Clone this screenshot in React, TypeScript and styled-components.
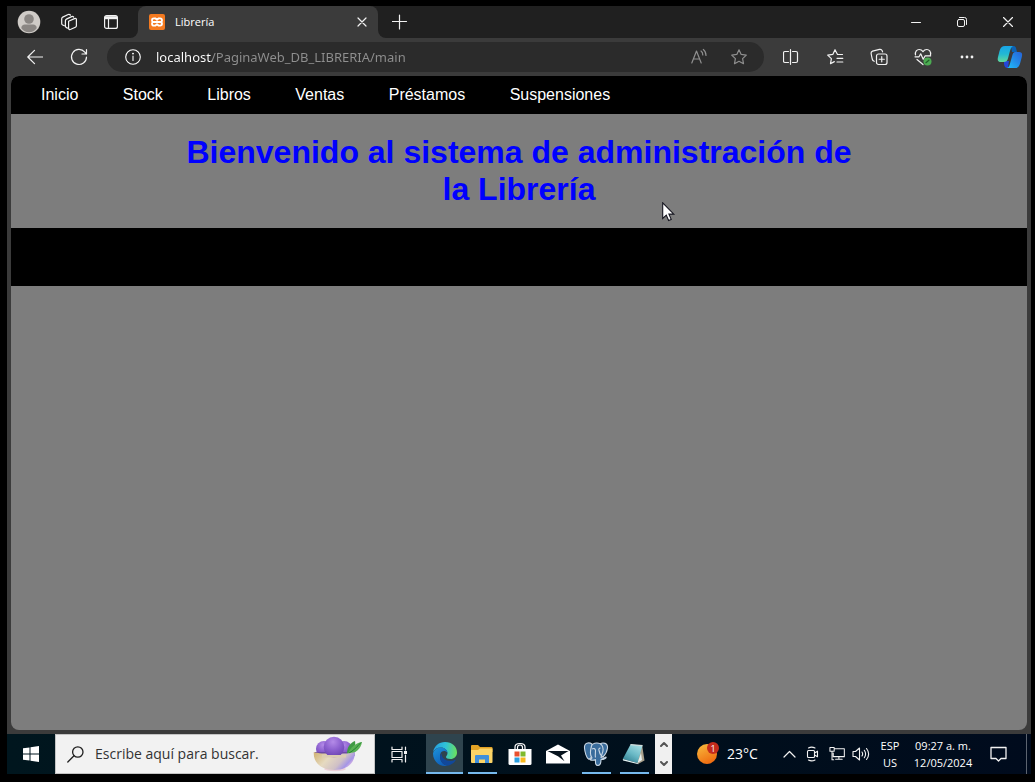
import React from 'react';
import styled, { createGlobalStyle, css } from 'styled-components';

const uiFont = `"Segoe UI", "Open Sans", "Noto Sans", sans-serif`;

const GlobalStyle = createGlobalStyle`
  *, *::before, *::after { box-sizing: border-box; }
  body { margin: 0; background: #000; }
  button, input { font: inherit; color: inherit; }
`;

const Desktop = styled.div`
  position: relative;
  display: flex;
  flex-direction: column;
  min-height: 100vh;
  padding: 6px 4px 8px 7px;
  background: #000;
  color: #fff;
  font: 12px/16px ${uiFont};
`;

const BrowserWindow = styled.div`
  flex: 1;
  display: flex;
  flex-direction: column;
  background: #3b3b3b;
`;

const TabStrip = styled.header`
  display: flex;
  height: 32px;
`;

const StripStart = styled.div`
  display: flex;
  padding-right: 3px;
  background: #202020;
  border-bottom-right-radius: 8px;
`;

const StripEnd = styled.div`
  flex: 1;
  display: flex;
  background: #202020;
  border-bottom-left-radius: 8px;
`;

const IconButton = styled.button<{ $width?: number; $dim?: boolean }>`
  flex: none;
  display: flex;
  align-items: center;
  justify-content: center;
  width: ${p => p.$width ?? 44}px;
  padding: 0;
  border: 0;
  background: none;
  color: ${p => (p.$dim ? '#8f8f8f' : '#f2f2f2')};
`;

const WindowControls = styled.div`
  display: flex;
  margin-left: auto;
`;

const TabBackdrop = styled.div`
  flex: 0 1 240px;
  background: #202020;
`;

const Tab = styled.div`
  display: flex;
  align-items: center;
  height: 100%;
  padding-left: 11px;
  border-radius: 8px 8px 0 0;
  background: #3b3b3b;
`;

const TabTitle = styled.span`
  flex: 1;
  margin-left: 10px;
  font-size: 11px;
`;

const Toolbar = styled.div`
  display: flex;
  height: 38px;
  padding-left: 6px;
`;

const AddressBar = styled.form`
  flex: 1;
  display: flex;
  align-items: center;
  height: 30px;
  margin: 4px 5px 4px 6px;
  padding: 0 4px 0 18px;
  border-radius: 15px;
  background: #2b2b2b;
`;

const UrlInput = styled.input`
  flex: 1;
  min-width: 0;
  margin-left: 15px;
  padding: 0;
  border: 0;
  outline: 0;
  font-family: "Segoe UI", "Noto Sans", sans-serif;
  font-size: 13px;
  line-height: 20px;
  color: transparent;
  caret-color: #fff;
  background: linear-gradient(90deg, #fff 56px, #8f8f8f 56px);
  background-clip: text;
  -webkit-background-clip: text;
`;

const Page = styled.div`
  flex: 1;
  margin: 0 4px 4px;
  border-radius: 8px;
  overflow: hidden;
  background: #7d7d7d;
  font: 16px/18px Arial, "Liberation Sans", sans-serif;
`;

const SiteNav = styled.nav`
  padding: 10px;
  background: #000;
`;

const NavList = styled.ul`
  margin: 0;
  padding: 0;
  list-style: none;
`;

const NavItem = styled.li`
  display: inline-block;
  padding: 0 20px;
`;

const NavLink = styled.a`
  color: #fff;
  text-decoration: none;
`;

const Title = styled.h1`
  max-width: 680px;
  margin: 0 auto;
  padding: 20px 0;
  color: #00f;
  font-size: 32px;
  line-height: 37px;
  text-align: center;
`;

const Band = styled.div`
  height: 58px;
  background: #000;
`;

const Pointer = styled.svg`
  position: absolute;
  left: 662px;
  top: 202px;
`;

const Taskbar = styled.footer`
  display: flex;
  height: 40px;
  background: linear-gradient(90deg, #00161e, #000f1c 65%, #000b1d);
`;

const SearchBox = styled.label`
  flex: 0 1 320px;
  display: flex;
  align-items: center;
  padding: 0 11px;
  border: 1px solid #c4c4c4;
  background: #f2f2f2;
  color: #202020;
`;

const SearchInput = styled.input`
  flex: 1;
  min-width: 0;
  margin-left: 11px;
  padding: 0;
  border: 0;
  outline: 0;
  background: none;
  font-size: 14px;
  line-height: 20px;
  &::placeholder { color: #333; opacity: 1; }
`;

const Apps = styled.div`
  display: flex;
  margin: 0 2px 0 3px;
`;

const AppButton = styled(IconButton)<{ $open?: boolean; $active?: boolean }>`
  width: 38px;
  ${p => p.$open && css`
    background: linear-gradient(#76b9ed, #76b9ed) center bottom / 29px 2px no-repeat;
  `}
  ${p => p.$active && css`
    width: 37px;
    background: linear-gradient(#76b9ed, #76b9ed) center bottom / 100% 2px no-repeat #2f444e;
  `}
`;

const Scroller = styled.div`
  display: flex;
  flex-direction: column;
  width: 17px;
  background: #f0f0f0;
`;

const ScrollButton = styled.button`
  flex: 1;
  display: flex;
  align-items: center;
  justify-content: center;
  padding: 0;
  border: 0;
  background: none;
  color: #555;
`;

const Tray = styled.div`
  display: flex;
  align-items: stretch;
  margin-left: auto;
`;

const Weather = styled.button`
  display: flex;
  align-items: center;
  gap: 8px;
  width: 84px;
  padding: 0;
  border: 0;
  background: none;
  font-size: 14px;
`;

const TrayText = styled.button<{ $width: number }>`
  width: ${p => p.$width}px;
  padding: 3px 0;
  border: 0;
  background: none;
  font-size: 11px;
  line-height: 17px;
  text-align: center;
  white-space: nowrap;
`;

const ShowDesktop = styled.button`
  width: 5px;
  margin-left: 12px;
  padding: 0;
  border: 0;
  border-left: 1px solid #5c6470;
  background: none;
`;

type IconProps = { w?: number; h?: number; sw?: number; children: React.ReactNode };
const Icon = ({ w = 18, h = w, sw = 1.2, children }: IconProps) => (
  <svg width={w} height={h} viewBox={`0 0 ${w} ${h}`} fill="none" stroke="currentColor"
    strokeWidth={sw} strokeLinecap="round" strokeLinejoin="round" aria-hidden="true">
    {children}
  </svg>
);

const Avatar = () => (
  <Icon w={24}>
    <g stroke="none">
      <circle cx="12" cy="12" r="11.3" fill="#cfcbc7" />
      <circle cx="12" cy="9" r="4.8" fill="#8a8683" />
      <path d="M4.3 18.3c0-2.6 1.6-3.8 3.6-3.8h8.2c2 0 3.6 1.2 3.6 3.8A10 10 0 0 1 12 22.3a10 10 0 0 1-7.7-4z" fill="#8a8683" />
    </g>
  </Icon>
);

const Workspaces = () => (
  <Icon w={18}>
    <path d="M8.6 8.2 14.4 5.6q2-.7 2 1v6.2q0 1-1 1.4l-4.6 2.1q-2.2.8-2.2-1.2z" />
    <path d="M8 15.2 6.4 14.6q-1-.4-1-1.5V7.8q0-1.2 1-1.7l5.2-2.5q1.2-.5 2 .4" />
    <path d="M4.4 12.8 2.6 12q-.9-.4-.9-1.4V5.8q0-1.2 1-1.7L8.2 1.5q1.2-.5 2.2.5" />
  </Icon>
);

const TabActions = () => (
  <Icon w={16}>
    <rect x="1.6" y="1.6" width="12.8" height="12.8" rx="2" />
    <path d="M5.500 5v9" />
    <path d="M2 2.200h12v3H2z" fill="currentColor" stroke="none" />
  </Icon>
);

const Xampp = () => (
  <Icon w={16} sw={2}>
    <rect width="16" height="16" rx="2" fill="#f47a20" stroke="none" />
    <path d="M6.200 4.300H5Q3 4.300 3 6.200T5 8h6q2 0 2-1.800t-2-1.900H9.800L8 5.800zM6.200 11.700H5Q3 11.700 3 9.800T5 8h6q2 0 2 1.800t-2 1.900H9.800L8 10.200z" stroke="#fff" strokeWidth="1.800" />
  </Icon>
);

const starPath = 'M9 1.800 11.200 6.400 16.300 7.100 12.600 10.600 13.500 15.700 9 13.300 4.500 15.700 5.400 10.600 1.700 7.100 6.800 6.400z';

const Copilot = () => (
  <svg width="26" height="24" viewBox="0 0 26 24" aria-hidden="true">
    <defs>
      <linearGradient id="cpA" x1="0" y1="0" x2="0" y2="1">
        <stop offset="0" stopColor="#18a5e8" /><stop offset=".5" stopColor="#22b8d4" /><stop offset="1" stopColor="#62d99a" />
      </linearGradient>
      <linearGradient id="cpB" x1="1" y1="0" x2="0" y2="1">
        <stop offset="0" stopColor="#2663d8" /><stop offset=".5" stopColor="#238be8" /><stop offset="1" stopColor="#1fc0fb" />
      </linearGradient>
    </defs>
    <path d="M14 1h2.500c2 0 2.500 1.500 3 4l.5 2h-5z" fill="#0b62b5" />
    <path d="M7 16h5l-1 7c-3 0-3.500-1.500-4-4z" fill="#2446d8" />
    <path d="M8 1h8c-2 1-2.600 3.500-3.300 6l-1.600 6c-.8 3-2 4-4.600 4H4c-3 0-3.800-1.500-3-5l1.500-6C3.500 2.500 5 1 8 1z" fill="url(#cpA)" />
    <path d="M18.500 7H22c3 0 3.600 1.500 2.800 5l-1.600 6c-1 3.500-2.200 5-5.200 5h-8c2-.6 2.700-3 3.300-5.500l1.700-6C15.800 8.300 16.500 7 18.500 7z" fill="url(#cpB)" />
  </svg>
);

const FruitBowl = () => (
  <svg width="50" height="36" viewBox="0 0 50 36" aria-hidden="true">
    <defs>
      <radialGradient id="berry" cx=".45" cy=".25" r=".8">
        <stop offset="0" stopColor="#b48be8" /><stop offset=".5" stopColor="#8c60cf" /><stop offset="1" stopColor="#6540ab" />
      </radialGradient>
      <linearGradient id="bowl" x1="0" y1=".2" x2="1" y2=".6">
        <stop offset="0" stopColor="#d3b77c" /><stop offset=".35" stopColor="#e6dac0" /><stop offset=".68" stopColor="#cfc0c6" /><stop offset=".86" stopColor="#a595e6" /><stop offset="1" stopColor="#f0c4e4" />
      </linearGradient>
    </defs>
    <ellipse cx="22" cy="33" rx="11" ry="2.200" fill="#ecd0d8" />
    <circle cx="11" cy="13" r="8" fill="url(#berry)" />
    <circle cx="31" cy="13" r="8" fill="url(#berry)" />
    <path d="M1.500 16h40v4h-40z" fill="#6c4aa4" />
    <path d="M34 18c0-7 3-11 8-13 1 4-1 9-8 13z" fill="#3f9a43" />
    <path d="M35 18c2-6 7-11 14-12-1 6-6 12-14 12z" fill="#58b153" />
    <path d="M36 17c4-2 8-6 12-10.500" stroke="#257f35" fill="none" />
    <path d="M.8 16c6 2.500 35 2.500 41 0C42.500 26 35 34 21.300 34S0 26 .8 16z" fill="url(#bowl)" />
    <circle cx="21" cy="11" r="10.300" fill="url(#berry)" />
    <path d="M9 18.500c6 .8 18 .8 24 0v3H9z" fill="#dccdb2" />
  </svg>
);

const EdgeLogo = () => (
  <svg width="26" height="26" viewBox="0 0 26 26" aria-hidden="true">
    <defs>
      <linearGradient id="edA" x1="0" y1=".4" x2="1" y2=".5">
        <stop offset="0" stopColor="#259ee1" /><stop offset=".5" stopColor="#2fc2d8" /><stop offset="1" stopColor="#6be05c" />
      </linearGradient>
      <linearGradient id="edB" x1="0" y1="0" x2=".5" y2="1">
        <stop offset="0" stopColor="#1c94dc" /><stop offset="1" stopColor="#0f5fb8" />
      </linearGradient>
    </defs>
    <path d="M1.200 11C2 5 7 1 13 1c7 0 12 4.500 12 10.500 0 4-3 6.500-6.500 6.500-3 0-4.500-1-4.500-2s1.500-1.500 1.500-4c0-3-3-5.500-6.500-5.500C5 6.500 2.500 8.500 1.200 11z" fill="url(#edA)" />
    <path d="M1 12.500C2 8.500 5.500 6.500 9 6.500c3.500 0 6.500 2.500 6.500 5.500-1-1.500-2.200-2-3.500-2-3 0-4 3-4 5.500 0 4.500 3 8.500 7.500 9.200C8 26.500 1 20.500 1 12.500z" fill="url(#edB)" />
    <path d="M9.500 12.500c-1 1.200-1.500 2-1.500 3.500 0 4.500 3.500 8.500 7.500 8.700 3.500-.6 6.500-2.700 8-5.200.3-.6-.2-.8-.7-.5-1.300.7-2.800 1-4.300 1-5 0-9-3-9-7.500z" fill="#11489a" />
  </svg>
);

const Explorer = () => (
  <svg width="22" height="20" viewBox="0 0 22 20" aria-hidden="true">
    <path d="M0 2q0-1 1-1h6l2 2h11.500q1 0 1 1v4H0z" fill="#e3a325" />
    <path d="M0 6h7l2-1.500h12.500V18q0 1-1 1H1q-1 0-1-1z" fill="#fbd467" />
    <path d="M4 19v-7q0-1 1-1h12q1 0 1 1v7h-4v-3.500H8V19z" fill="#3f8fdb" />
  </svg>
);

const Store = () => (
  <svg width="24" height="24" viewBox="0 0 24 24" aria-hidden="true">
    <path d="M7 8V5q0-3.500 5-3.500T17 5v3M9.500 8V5.500Q9.500 3 12 3t2.500 2.500V8" fill="none" stroke="#fff" strokeWidth="1.200" />
    <path d="M.5 7h23v14.500q0 1.500-1.500 1.500H2q-1.500 0-1.500-1.500z" fill="#fff" />
    <path d="M6.500 9.500h5v5h-5z" fill="#e8502e" /><path d="M12.500 9.500h5v5h-5z" fill="#7fba2c" />
    <path d="M6.500 15.500h5v5h-5z" fill="#2a9fe0" /><path d="M12.500 15.500h5v5h-5z" fill="#f8b91e" />
  </svg>
);

const Mail = () => (
  <svg width="24" height="20" viewBox="0 0 24 20" aria-hidden="true">
    <path d="M0 7 12 .5 24 7v12.500H0z" fill="#fff" />
    <path d="M1.500 7h21l-7.500 4.600 3.500 5.600-6.500-5z" fill="#06131d" />
  </svg>
);

const Postgres = () => (
  <svg width="26" height="26" viewBox="0 0 26 26" fill="#396c9c" stroke="#c9d7e4" strokeWidth="1.100" strokeLinejoin="round" aria-hidden="true">
    <path d="M9 3C6 1 1 1.500 1.500 7c.3 4 2 10 4 11 1.500.8 2.500-1.500 3.500-2.500z" />
    <path d="M17 3c3-2 8-1 7.500 4-.4 3-2.500 7-4.500 9l-3-2z" />
    <path d="M8.500 5c1.500-4 8.500-4 10.500-.5 1.500 2.500 1 7-.5 10l-.5 2c1.500.8 4 .3 5-.5.8 1-2.500 2.800-5 2.500 0 3-.5 6-3 6-3 0-2.500-3-2.500-6-1.500 1-4.500 1-5.500 0 1-1 2-.7 2-1.700-2.500-2.500-1.500-8-.5-11.800z" />
    <path d="M9 8c1.500-1 3.500-.5 3.500 1.500s-.5 5 0 7M17.500 7c-1.500 0-2 1-1.500 2.500.5 2 1 3.500 2 5" fill="none" />
  </svg>
);

const Notepad = () => (
  <svg width="24" height="24" viewBox="0 0 24 24" aria-hidden="true">
    <defs>
      <linearGradient id="note" x1=".8" y1="0" x2=".2" y2="1">
        <stop offset="0" stopColor="#a5dde3" /><stop offset=".5" stopColor="#6ab9c6" /><stop offset="1" stopColor="#2f7e90" />
      </linearGradient>
    </defs>
    <path d="m20 2.500 2.500 16L16 22l-1-2z" fill="#a8a08c" />
    <path d="M8.500 2.500 20.500 3.500 15.500 21 .8 17z" fill="url(#note)" />
    <path d="m.8 17 14.700 4 1 1.300L1 18.500z" fill="#e4f3f3" />
    <path d="m8.500 2.700 12 1" stroke="#d3dedd" strokeWidth="1.200" />
    <path d="m19 11-3.500 10 4.500-3z" fill="#e8f1f0" />
  </svg>
);

const WeatherIcon = () => (
  <svg width="22" height="24" viewBox="0 0 22 24" aria-hidden="true">
    <defs>
      <linearGradient id="sun" x1=".1" y1="0" x2=".6" y2="1">
        <stop offset="0" stopColor="#f8ba3d" /><stop offset="1" stopColor="#ef6b10" />
      </linearGradient>
    </defs>
    <circle cx="10" cy="12" r="10" fill="url(#sun)" />
    <circle cx="16" cy="6" r="6" fill="#c42b1c" />
    <text x="16" y="9.500" textAnchor="middle" fontSize="9" fill="#fff">1</text>
  </svg>
);

const links = ['Inicio', 'Stock', 'Libros', 'Ventas', 'Préstamos', 'Suspensiones'];

export default function App() {
  return (
    <Desktop>
      <GlobalStyle />
      <BrowserWindow>
        <TabStrip>
          <StripStart>
            <IconButton aria-label="Perfil"><Avatar /></IconButton>
            <IconButton $width={36} aria-label="Áreas de trabajo"><Workspaces /></IconButton>
            <IconButton $width={48} aria-label="Acciones de pestañas"><TabActions /></IconButton>
          </StripStart>
          <TabBackdrop>
            <Tab>
              <Xampp />
              <TabTitle>Librería</TabTitle>
              <IconButton $width={32} aria-label="Cerrar pestaña">
                <Icon w={10}><path d="m1 1 8 8M9 1 1 9" /></Icon>
              </IconButton>
            </Tab>
          </TabBackdrop>
          <StripEnd>
            <IconButton aria-label="Nueva pestaña">
              <Icon w={16}><path d="M7.500 1v14M.5 7.500h14" /></Icon>
            </IconButton>
            <WindowControls>
              <IconButton $width={46} aria-label="Minimizar">
                <Icon w={10} sw={1}><path d="M.5 5.500h9" /></Icon>
              </IconButton>
              <IconButton $width={46} aria-label="Restaurar">
                <Icon w={10} sw={1}>
                  <rect x=".5" y="2.500" width="7" height="7" rx="1.500" />
                  <path d="M2.500.5h5q2 0 2 2v5" />
                </Icon>
              </IconButton>
              <IconButton $width={46} aria-label="Cerrar">
                <Icon w={10}><path d="m.5.5 9 9M9.500.5l-9 9" /></Icon>
              </IconButton>
            </WindowControls>
          </StripEnd>
        </TabStrip>

        <Toolbar>
          <IconButton aria-label="Atrás">
            <Icon w={16}><path d="M15.500 8H.8M7.500 1.300.8 8l6.700 6.700" /></Icon>
          </IconButton>
          <IconButton aria-label="Actualizar">
            <Icon w={18}><path d="M16.500 9A7.500 7.500 0 1 1 14.800 4.200L16.300 6M16.500 1.500V6H12" /></Icon>
          </IconButton>
          <AddressBar onSubmit={e => e.preventDefault()}>
            <Icon w={16} sw={1.1}>
              <circle cx="8" cy="8" r="7.300" />
              <path d="M8 7v4.500" /><circle cx="8" cy="4.600" r=".4" fill="currentColor" />
            </Icon>
            <UrlInput aria-label="Dirección" defaultValue="localhost/PaginaWeb_DB_LIBRERIA/main" />
            <IconButton type="button" $width={38} $dim aria-label="Leer en voz alta">
              <Icon w={18}>
                <path d="m1.800 15 4.700-12 4.700 12M3.500 11h6M11 3q1.800 1.300 1.800 4M13.300 1.500q2.700 2 2.700 6" />
              </Icon>
            </IconButton>
            <IconButton type="button" $width={42} $dim aria-label="Agregar a favoritos">
              <Icon w={18}><path d={starPath} /></Icon>
            </IconButton>
          </AddressBar>
          <IconButton aria-label="Pantalla dividida">
            <Icon w={16}>
              <path d="M5.500 2.500H2q-1.500 0-1.500 1.500v8q0 1.500 1.500 1.500h3.500M9.500 2.500H13q1.500 0 1.500 1.500v8q0 1.500-1.500 1.500H9.500M7.500.7v14.600" />
            </Icon>
          </IconButton>
          <IconButton aria-label="Favoritos">
            <Icon w={18}>
              <path d="M16.500 6.500h-5L9 1.700 6.800 6.400 1.700 7.100 5.400 10.600 4.500 15.700 8.300 13.600M11 10.300h5.800M11 14h5.800" />
            </Icon>
          </IconButton>
          <IconButton aria-label="Colecciones">
            <Icon w={18}>
              <rect x="6.500" y="6" width="10.500" height="10.500" rx="2" />
              <path d="M11.750 8.700v5.100M9.200 11.250h5.100M4.200 13.300Q2.600 12.700 2.200 11L1.100 5.500q-.3-1.800 1.400-2.400L9.500 1.400q2-.4 2.700 1.300l.4 1.200" />
            </Icon>
          </IconButton>
          <IconButton aria-label="Estado del explorador">
            <Icon w={18}>
              <path d="M1.500 7C.8 3.500 3 1.500 5.200 1.500 7 1.500 8.200 2.500 9 3.700c.8-1.200 2-2.200 3.800-2.200C15 1.500 17.200 3.500 16.500 7M1 8.800h4l1.700-3 2.500 5.500 2-3.500h5.500M3 11.500l6 5" />
              <circle cx="13.500" cy="13.500" r="4" fill="#4cab52" stroke="none" />
              <path d="m11.900 14.700 3-2.500" stroke="#245d29" />
            </Icon>
          </IconButton>
          <IconButton aria-label="Configuración y más">
            <Icon w={14}>
              <g fill="currentColor" stroke="none">
                <circle cx="2" cy="7" r="1.400" /><circle cx="7" cy="7" r="1.400" /><circle cx="12" cy="7" r="1.400" />
              </g>
            </Icon>
          </IconButton>
          <IconButton $width={42} aria-label="Copilot"><Copilot /></IconButton>
        </Toolbar>

        <Page>
          <SiteNav>
            <NavList>
              {links.map(label => (
                <React.Fragment key={label}>
                  <NavItem><NavLink href="#">{label}</NavLink></NavItem>{' '}
                </React.Fragment>
              ))}
            </NavList>
          </SiteNav>
          <Title>Bienvenido al sistema de administración de la Librería</Title>
          <Band />
        </Page>
      </BrowserWindow>

      <Taskbar>
        <IconButton $width={48} aria-label="Inicio">
          <svg width="16" height="16" viewBox="0 0 16 16" fill="#fff" aria-hidden="true">
            <path d="M0 2.300 6.500 1.400v6.100H0zM7.500 1.200 16 0v7.500H7.500zM0 8.500h6.500v6.100L0 13.700zM7.500 8.500H16V16l-8.500-1.200z" />
          </svg>
        </IconButton>
        <SearchBox>
          <Icon w={17} sw={1.3}><circle cx="10.800" cy="6" r="5.200" /><path d="M7 9.800.8 16" /></Icon>
          <SearchInput aria-label="Buscar" placeholder="Escribe aquí para buscar." />
          <FruitBowl />
        </SearchBox>
        <IconButton $width={48} aria-label="Vista de tareas">
          <Icon w={17} sw={1.2}>
            <path d="M1 1v2.500h10V1M1 16v-2.500h10V16M1 5.500h10v6H1zM14.500 1v3M14.500 9v7" />
            <path d="M13 5h3v3h-3z" fill="currentColor" stroke="none" />
          </Icon>
        </IconButton>
        <Apps>
          <AppButton $active aria-label="Microsoft Edge"><EdgeLogo /></AppButton>
          <AppButton $open aria-label="Explorador de archivos"><Explorer /></AppButton>
          <AppButton aria-label="Microsoft Store"><Store /></AppButton>
          <AppButton aria-label="Correo"><Mail /></AppButton>
          <AppButton $open aria-label="pgAdmin"><Postgres /></AppButton>
          <AppButton $open aria-label="Bloc de notas"><Notepad /></AppButton>
        </Apps>
        <Scroller>
          <ScrollButton aria-label="Subir"><Icon w={8} h={6} sw={2}><path d="m1 5 3-3 3 3" /></Icon></ScrollButton>
          <ScrollButton aria-label="Bajar"><Icon w={8} h={6} sw={2}><path d="m1 1 3 3 3-3" /></Icon></ScrollButton>
        </Scroller>
        <Tray>
          <Weather><WeatherIcon />23°C</Weather>
          <IconButton $width={16} aria-label="Mostrar iconos ocultos">
            <Icon w={13} h={8}><path d="m1 7 5.500-5.500L12 7" /></Icon>
          </IconButton>
          <IconButton $width={32} aria-label="Reunirse ahora">
            <Icon w={14} h={16} sw={1.1}>
              <rect x="1.500" y="4.500" width="7" height="7" rx="1" />
              <path d="m8.500 7 3-1.800v5.600L8.500 9M2.500 2Q5.500.2 9 2M2.500 14q3 1.800 6.500 0" />
            </Icon>
          </IconButton>
          <IconButton $width={16} aria-label="Red">
            <Icon w={17} h={16} sw={1.1}>
              <path d="M6 2.500h10.300v8.300H4.500V7M7 13.500h7M10.500 11v2.500M1 1h4.500v4H1zM3.200 5v9H5" />
            </Icon>
          </IconButton>
          <IconButton $width={32} aria-label="Volumen">
            <Icon w={18} h={16} sw={1.1}>
              <path d="M1 5.500h2.500L7.500 2v12l-4-3.500H1zM10 6q1.300 2 0 4M12.300 4.300q2.600 3.700 0 7.400M14.500 2.500q4.300 5.500 0 11" />
            </Icon>
          </IconButton>
          <TrayText $width={26}>ESP<br />US</TrayText>
          <TrayText $width={80}>09:27 a. m.<br />12/05/2024</TrayText>
          <IconButton $width={31} aria-label="Notificaciones">
            <Icon w={17} h={17} sw={1.3}><path d="M1 1.500h15v11h-5L8.500 15 6 12.500H1z" /></Icon>
          </IconButton>
          <ShowDesktop aria-label="Mostrar escritorio" />
        </Tray>
      </Taskbar>

      <Pointer width="14" height="20" viewBox="0 0 14 20" aria-hidden="true">
        <path d="M.7.800v15.700l3.600-3.400 2.300 5.400 2.600-1.100-2.300-5.300h4.900z" fill="#fff" stroke="#15151f" strokeWidth="1.100" />
      </Pointer>
    </Desktop>
  );
}
